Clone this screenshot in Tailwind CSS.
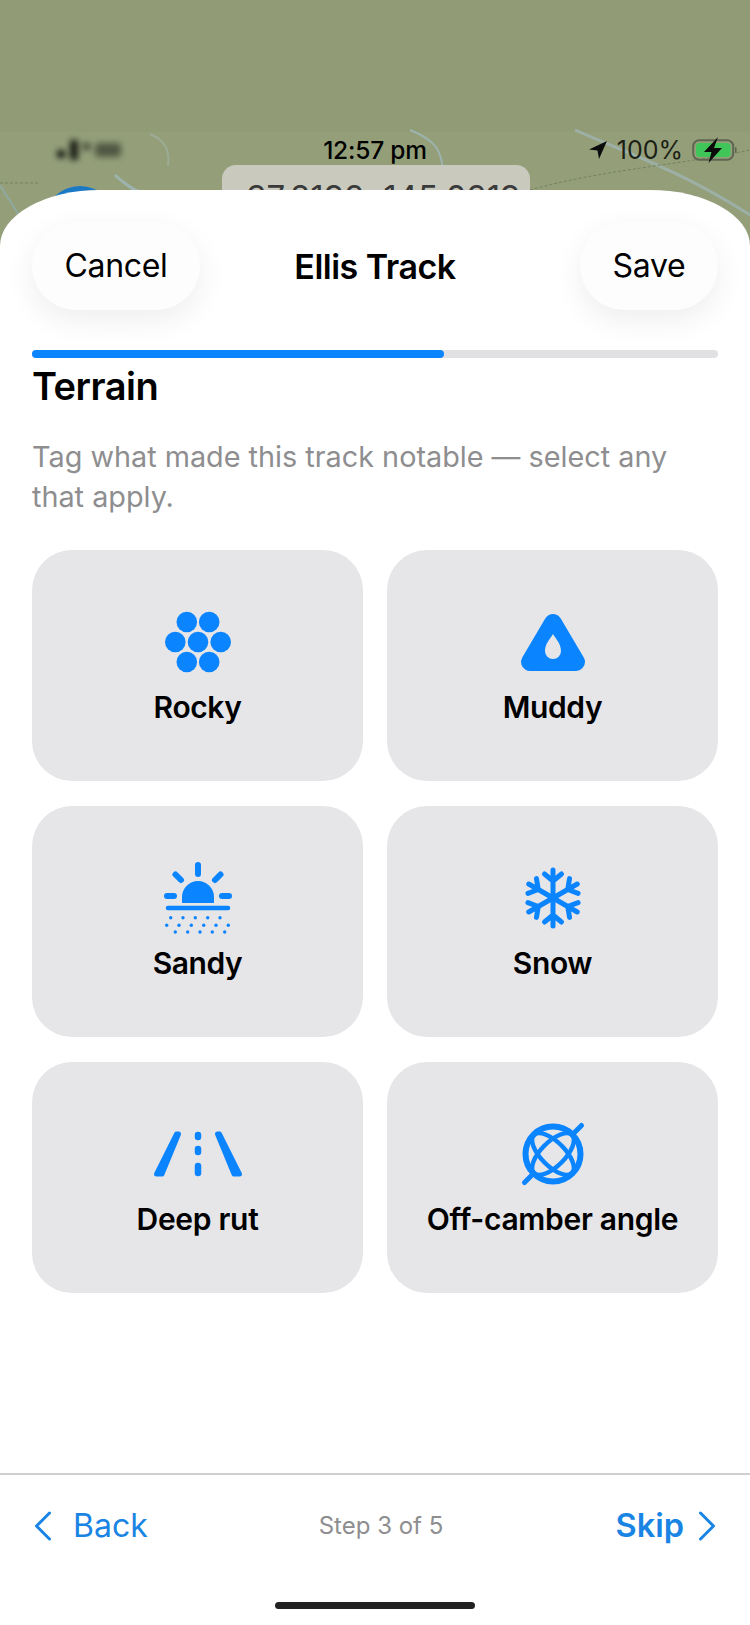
<!DOCTYPE html>
<html lang="en">
<head>
  <meta charset="UTF-8" />
  <meta name="viewport" content="width=device-width, initial-scale=1.0"/>
  <title>Ellis Track - Terrain</title>
  <script src="https://cdn.jsdelivr.net/npm/@tailwindcss/browser@4"></script>
</head>
<body class="bg-[#919c77] font-['Inter',sans-serif] text-black">
  <div class="relative w-[750px] h-[1625px] overflow-hidden flex flex-col">

    <!-- map behind the sheet -->
    <svg class="absolute inset-0" width="750" height="300" viewBox="0 0 750 300" fill="none">
      <path d="M0 132 H750 V300 H0Z" fill="#949f7a"/>
      <path d="M150 134 C165 140 170 150 168 166" stroke="#9fb0a0" stroke-width="2" opacity="0.7"/>
      <path d="M410 130 C435 140 442 150 443 172" stroke="#9db4ae" stroke-width="2"/>
      <path d="M575 130 C620 150 680 170 750 215" stroke="#9db0a6" stroke-width="3"/>
      <path d="M0 185 L25 225 L40 205" stroke="#8fa99f" stroke-width="2"/>
      <path d="M115 175 C125 185 135 190 145 195" stroke="#9db4ae" stroke-width="3"/>
      <path d="M0 183 H40 M530 190 C600 170 680 165 750 150" stroke="#75805f" stroke-width="1" stroke-dasharray="3 2"/>
      <circle cx="80" cy="222" r="36" fill="#1b78c4"/>
    </svg>

    <!-- status bar -->
    <div class="relative flex items-center h-[30px] mt-[135px] pl-[57px] pr-[13px]">
      <div class="flex items-center gap-[5px] w-[250px] blur-[3px]">
        <span class="w-[8px] h-[8px] mt-[8px] rounded-full bg-black"></span>
        <span class="w-[8px] h-[20px] rounded-[2px] bg-black/85"></span>
        <span class="w-[7px] h-[7px] -mt-[8px] rounded-full bg-black/70"></span>
        <span class="w-[26px] h-[14px] rounded-[4px] bg-black/45"></span>
      </div>
      <span class="absolute left-0 right-0 text-center text-[24.500px] font-medium tracking-[-0.2px] pointer-events-none">12:57 pm</span>
      <div class="ml-auto flex items-center">
        <svg width="20" height="18" viewBox="0 0 20 18"><path d="M19 0 L1 8.500 L9.500 9.500 L11 18Z" fill="#0b0b0b"/></svg>
        <span class="ml-[9px] text-[25px] leading-none text-[#1c1f15]">100%</span>
        <svg class="ml-[9px]" width="45" height="26" viewBox="0 0 45 26" fill="none">
          <rect x="1.200" y="3.200" width="40" height="19.600" rx="6" stroke="#5e6551" stroke-width="2"/>
          <rect x="4" y="6" width="34.500" height="14" rx="3.500" fill="#3fc558"/>
          <rect x="43" y="10" width="1.500" height="6" rx="0.750" fill="#5e6551"/>
          <path d="M26 0 L12 15 H19.500 L16.500 26 L30 11 H22Z" fill="#0b0b0b"/>
        </svg>
      </div>
    </div>

    <!-- coordinates pill, mostly covered by the sheet -->
    <div class="relative h-[25px] ml-[222px] w-[308px] rounded-t-[14px] bg-[#c9cabd] overflow-hidden">
      <span class="block mt-[13px] text-center text-[33px] leading-[38px] text-[#3a3a3a] whitespace-nowrap">-37.8192, 145.0219</span>
    </div>

    <!-- sheet -->
    <div class="relative flex-1 flex flex-col bg-white rounded-tl-[100px_56px] rounded-tr-[100px_56px]">
      <header class="flex items-center h-[88px] mt-[32px] mx-[32px] shrink-0">
        <div class="flex-1 h-full">
          <button class="w-[168px] h-full rounded-[44px] bg-[#fdfdfd] text-[32px] tracking-[-0.3px] shadow-[0_10px_30px_rgba(0,0,0,0.07)]">Cancel</button>
        </div>
        <h2 class="text-[34px] font-semibold tracking-[-0.5px]">Ellis Track</h2>
        <div class="flex-1 h-full flex justify-end">
          <button class="w-[138px] h-full rounded-[44px] bg-[#fdfdfd] text-[32px] tracking-[-0.3px] shadow-[0_10px_30px_rgba(0,0,0,0.07)]">Save</button>
        </div>
      </header>

      <div class="h-[8px] mt-[40px] mx-[32px] rounded-full bg-[#e1e1e4] shrink-0">
        <div class="h-full w-[412px] rounded-full bg-[#0a84ff]"></div>
      </div>

      <main class="flex-1 px-[32px]">
        <h1 class="text-[38px] leading-[44px] mt-[6px] font-semibold tracking-[-0.5px]">Terrain</h1>
        <p class="mt-[29px] max-w-[665px] text-[28.800px] leading-[40px] text-[#8e8e90]">Tag what made this track notable — select any that apply.</p>

        <div class="grid grid-cols-2 gap-x-[24px] gap-y-[25px] mt-[33px]">
          <div class="h-[231px] rounded-[40px] bg-[#e6e6e9] flex flex-col items-center pt-[50px]">
            <svg width="84" height="84" viewBox="-42 -42 84 84" fill="#0a84ff">
              <circle cx="-11.200" cy="-20" r="10.300"/><circle cx="11.200" cy="-20" r="10.300"/>
              <circle cx="-22.700" cy="0" r="10.300"/><circle cx="0" cy="0" r="10.300"/><circle cx="22.700" cy="0" r="10.300"/>
              <circle cx="-11.200" cy="20" r="10.300"/><circle cx="11.200" cy="20" r="10.300"/>
            </svg>
            <span class="mt-[5px] text-[30px] leading-[36px] font-semibold tracking-[-0.4px]">Rocky</span>
          </div>

          <div class="h-[231px] rounded-[40px] bg-[#e6e6e9] flex flex-col items-center pt-[50px]">
            <svg width="84" height="84" viewBox="-42 -42 84 84">
              <path d="M0 -19 L-23 20 H23Z" fill="#0a84ff" stroke="#0a84ff" stroke-width="18" stroke-linejoin="round"/>
              <path d="M0 -8 C3 -3 8 2 8 9 A8 8 0 0 1 -8 9 C-8 2 -3 -3 0 -8Z" fill="#e6e6e9"/>
            </svg>
            <span class="mt-[5px] text-[30px] leading-[36px] font-semibold tracking-[-0.4px]">Muddy</span>
          </div>

          <div class="h-[231px] rounded-[40px] bg-[#e6e6e9] flex flex-col items-center pt-[50px]">
            <svg width="84" height="84" viewBox="-42 -42 84 84" fill="#0a84ff" stroke="none">
              <g stroke="#0a84ff" stroke-width="6" stroke-linecap="round" fill="none">
                <path d="M0 -33 V-24"/>
                <path d="M-22.500 -23.500 L-17 -18"/>
                <path d="M22.500 -23.500 L17 -18"/>
                <path d="M-31 -2 H-24"/>
                <path d="M24 -2 H31"/>
              </g>
              <path d="M-16 5 V-1 A16 16 0 0 1 16 -1 V5Z"/>
              <path d="M-30 10 H30" stroke="#0a84ff" stroke-width="4.500" stroke-linecap="round"/>
              <g>
                <circle cx="-27.300" cy="19.700" r="1.700"/><circle cx="-15" cy="19.700" r="1.700"/><circle cx="-2.700" cy="19.700" r="1.700"/><circle cx="9.700" cy="19.700" r="1.700"/><circle cx="22" cy="19.700" r="1.700"/>
                <circle cx="-31.300" cy="27.300" r="1.700"/><circle cx="-19" cy="27.300" r="1.700"/><circle cx="-6.700" cy="27.300" r="1.700"/><circle cx="5.700" cy="27.300" r="1.700"/><circle cx="18" cy="27.300" r="1.700"/><circle cx="30.300" cy="27.300" r="1.700"/>
                <circle cx="-22.700" cy="34" r="1.700"/><circle cx="-10.300" cy="34" r="1.700"/><circle cx="2" cy="34" r="1.700"/><circle cx="14.300" cy="34" r="1.700"/><circle cx="26.700" cy="34" r="1.700"/>
              </g>
            </svg>
            <span class="mt-[5px] text-[30px] leading-[36px] font-semibold tracking-[-0.4px]">Sandy</span>
          </div>

          <div class="h-[231px] rounded-[40px] bg-[#e6e6e9] flex flex-col items-center pt-[50px]">
            <svg width="84" height="84" viewBox="-42 -42 84 84" fill="none" stroke="#0a84ff" stroke-width="5" stroke-linecap="round" stroke-linejoin="round">
              <g><path d="M0 0 V-28 M-8.500 -24 L0 -17 L8.500 -24"/></g>
              <g transform="rotate(60)"><path d="M0 0 V-28 M-8.500 -24 L0 -17 L8.500 -24"/></g>
              <g transform="rotate(120)"><path d="M0 0 V-28 M-8.500 -24 L0 -17 L8.500 -24"/></g>
              <g transform="rotate(180)"><path d="M0 0 V-28 M-8.500 -24 L0 -17 L8.500 -24"/></g>
              <g transform="rotate(240)"><path d="M0 0 V-28 M-8.500 -24 L0 -17 L8.500 -24"/></g>
              <g transform="rotate(300)"><path d="M0 0 V-28 M-8.500 -24 L0 -17 L8.500 -24"/></g>
            </svg>
            <span class="mt-[5px] text-[30px] leading-[36px] font-semibold tracking-[-0.4px]">Snow</span>
          </div>

          <div class="h-[231px] rounded-[40px] bg-[#e6e6e9] flex flex-col items-center pt-[50px]">
            <svg width="92" height="84" viewBox="-46 -42 92 84" fill="#0a84ff" stroke="#0a84ff" stroke-width="5" stroke-linejoin="round">
              <path d="M-21.500 -20 L-19.500 -20 L-36 20 L-41.500 20Z"/>
              <path d="M21.500 -20 L19.500 -20 L36 20 L41.500 20Z"/>
              <path d="M0 -19 V-17 M0 -5 V-2 M0 12 V19" fill="none" stroke-width="6.500" stroke-linecap="round"/>
            </svg>
            <span class="mt-[5px] text-[30px] leading-[36px] font-semibold tracking-[-0.3px]">Deep rut</span>
          </div>

          <div class="h-[231px] rounded-[40px] bg-[#e6e6e9] flex flex-col items-center pt-[50px]">
            <svg width="84" height="84" viewBox="-42 -42 84 84" fill="none" stroke="#0a84ff">
              <circle r="27.500" stroke-width="6"/>
              <path d="M-28.500 28.500 L-20 20 M28.500 -28.500 L20 -20" stroke-width="5" stroke-linecap="round"/>
              <ellipse rx="27" ry="12" transform="rotate(45)" stroke-width="4.500"/>
              <ellipse rx="27" ry="12" transform="rotate(-45)" stroke-width="4.500"/>
            </svg>
            <span class="mt-[5px] text-[30px] leading-[36px] font-semibold tracking-[-0.3px]">Off-camber angle</span>
          </div>
        </div>
      </main>

      <!-- step footer -->
      <footer class="h-[152px] shrink-0 border-t-[2px] border-[#cfcfd1] flex flex-col">
        <div class="flex items-center justify-between h-[102px] px-[34px]">
          <div class="flex items-center text-[#1a84e4] w-[200px]">
            <svg width="18" height="30" viewBox="0 0 18 30" fill="none" stroke="#1a84e4" stroke-width="3" stroke-linecap="round" stroke-linejoin="round"><path d="M15.500 2 L2.500 15 L15.500 28"/></svg>
            <span class="ml-[21px] text-[32px]">Back</span>
          </div>
          <span class="ml-[12px] text-[24px] text-[#8e8e90]">Step 3 of 5</span>
          <div class="flex items-center justify-end text-[#1a84e4] w-[200px]">
            <span class="text-[32.500px] font-semibold">Skip</span>
            <svg class="ml-[14px]" width="18" height="30" viewBox="0 0 18 30" fill="none" stroke="#1a84e4" stroke-width="3" stroke-linecap="round" stroke-linejoin="round"><path d="M2.500 2 L15.500 15 L2.500 28"/></svg>
          </div>
        </div>
        <div class="w-[200px] h-[7px] mx-auto mt-[25px] rounded-full bg-[#222222]"></div>
      </footer>
    </div>
  </div>
</body>
</html>
